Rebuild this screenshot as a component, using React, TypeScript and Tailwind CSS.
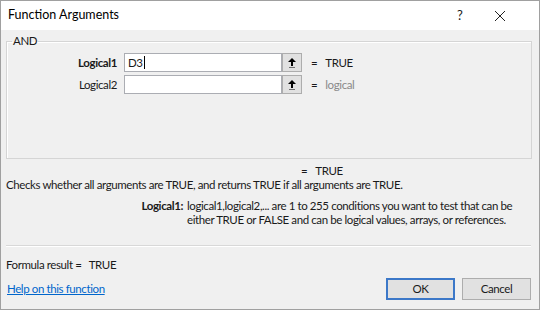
import React from "react";

const font = { fontFamily: 'Lato, "Open Sans", sans-serif' };

function RefButton() {
  return (
    <div className="w-[20px] h-[19px] border border-[#adadad] bg-[#e1e1e1] flex items-center justify-center">
      <svg width="10" height="12" viewBox="0 0 10 12">
        <path d="M5 1 L9 5 L6 5 L6 9 L4 9 L4 5 L1 5 Z" fill="#000" />
        <rect x="2" y="10" width="6" height="1" fill="#707070" />
      </svg>
    </div>
  );
}

export default function App() {
  return (
    <div
      className="w-[540px] h-[310px] border border-[#a0a0a0] bg-[#f0f0f0] flex flex-col text-[11.5px] tracking-[-0.4px] text-[#1a1a1a] overflow-hidden"
      style={font}
    >
      <div className="h-[29px] bg-white flex items-center pl-[7px] shrink-0 tracking-normal">
        <span className="flex-1 text-[12.5px] text-black">Function Arguments</span>
        <span className="w-[20px] text-center text-[13px] mr-[24px]">?</span>
        <svg width="12" height="12" viewBox="0 0 12 12" className="mr-[33px]">
          <path d="M1 1 L11 11 M11 1 L1 11" stroke="#222" strokeWidth="1" />
        </svg>
      </div>
      <div className="flex-1 flex flex-col px-[5px]">
        <fieldset className="mt-[4px] border border-[#d5d5d5] shadow-[inset_1px_1px_0_#fff] h-[125px] mx-0 mr-[2px] pl-[4px]">
          <legend className="px-[1px] ml-[1px] leading-[14px]">AND</legend>
          <div className="flex items-center mt-[5px] h-[19px]">
            <span className="w-[113px] text-right font-bold pr-[7px]">Logical1</span>
            <div className="w-[158px] h-[19px] bg-white border border-[#abadb3] flex items-center pl-[3px] leading-none">
              D3<span className="inline-block w-[1px] h-[13px] bg-black ml-[1px]" />
            </div>
            <RefButton />
            <span className="ml-[9px]">=</span>
            <span className="ml-[8px]">TRUE</span>
          </div>
          <div className="flex items-center mt-[3px] h-[19px]">
            <span className="w-[113px] text-right pr-[7px]">Logical2</span>
            <div className="w-[158px] h-[19px] bg-white border border-[#abadb3]" />
            <RefButton />
            <span className="ml-[9px]">=</span>
            <span className="ml-[8px] text-[#8a8a8a]">logical</span>
          </div>
        </fieldset>
        <div className="mt-[5px] pl-[295px] flex leading-[14px] h-[14px]">
          <span>=</span>
          <span className="ml-[8px]">TRUE</span>
        </div>
        <div className="leading-[14px] h-[14px] whitespace-nowrap">
          Checks whether all arguments are TRUE, and returns TRUE if all arguments are TRUE.
        </div>
        <div className="flex mt-[7px] leading-[14px]">
          <span className="w-[181px] text-right font-bold pr-[4px] shrink-0">Logical1:</span>
          <span className="w-[345px]">
            logical1,logical2,... are 1 to 255 conditions you want to test that can be either TRUE or FALSE and can be logical values, arrays, or references.
          </span>
        </div>
        <div className="mt-[18px] h-[1px] bg-[#d8d8d8] mr-[3px] shadow-[0_1px_0_#fff]" />
        <div className="mt-[12px] leading-[14px]">
          Formula result =&nbsp;&nbsp;&nbsp;TRUE
        </div>
        <div className="flex items-center mt-[6px]">
          <a className="flex-1 text-[#0066cc] underline leading-[14px] ml-[1px]">Help on this function</a>
          <button className="w-[69px] h-[22px] border-2 border-[#3c78c8] bg-[#e1e1e1] leading-none" style={font}>
            OK
          </button>
          <button className="w-[69px] h-[22px] ml-[7px] mr-[3px] border border-[#adadad] bg-[#e1e1e1] leading-none" style={font}>
            Cancel
          </button>
        </div>
      </div>
    </div>
  );
}
